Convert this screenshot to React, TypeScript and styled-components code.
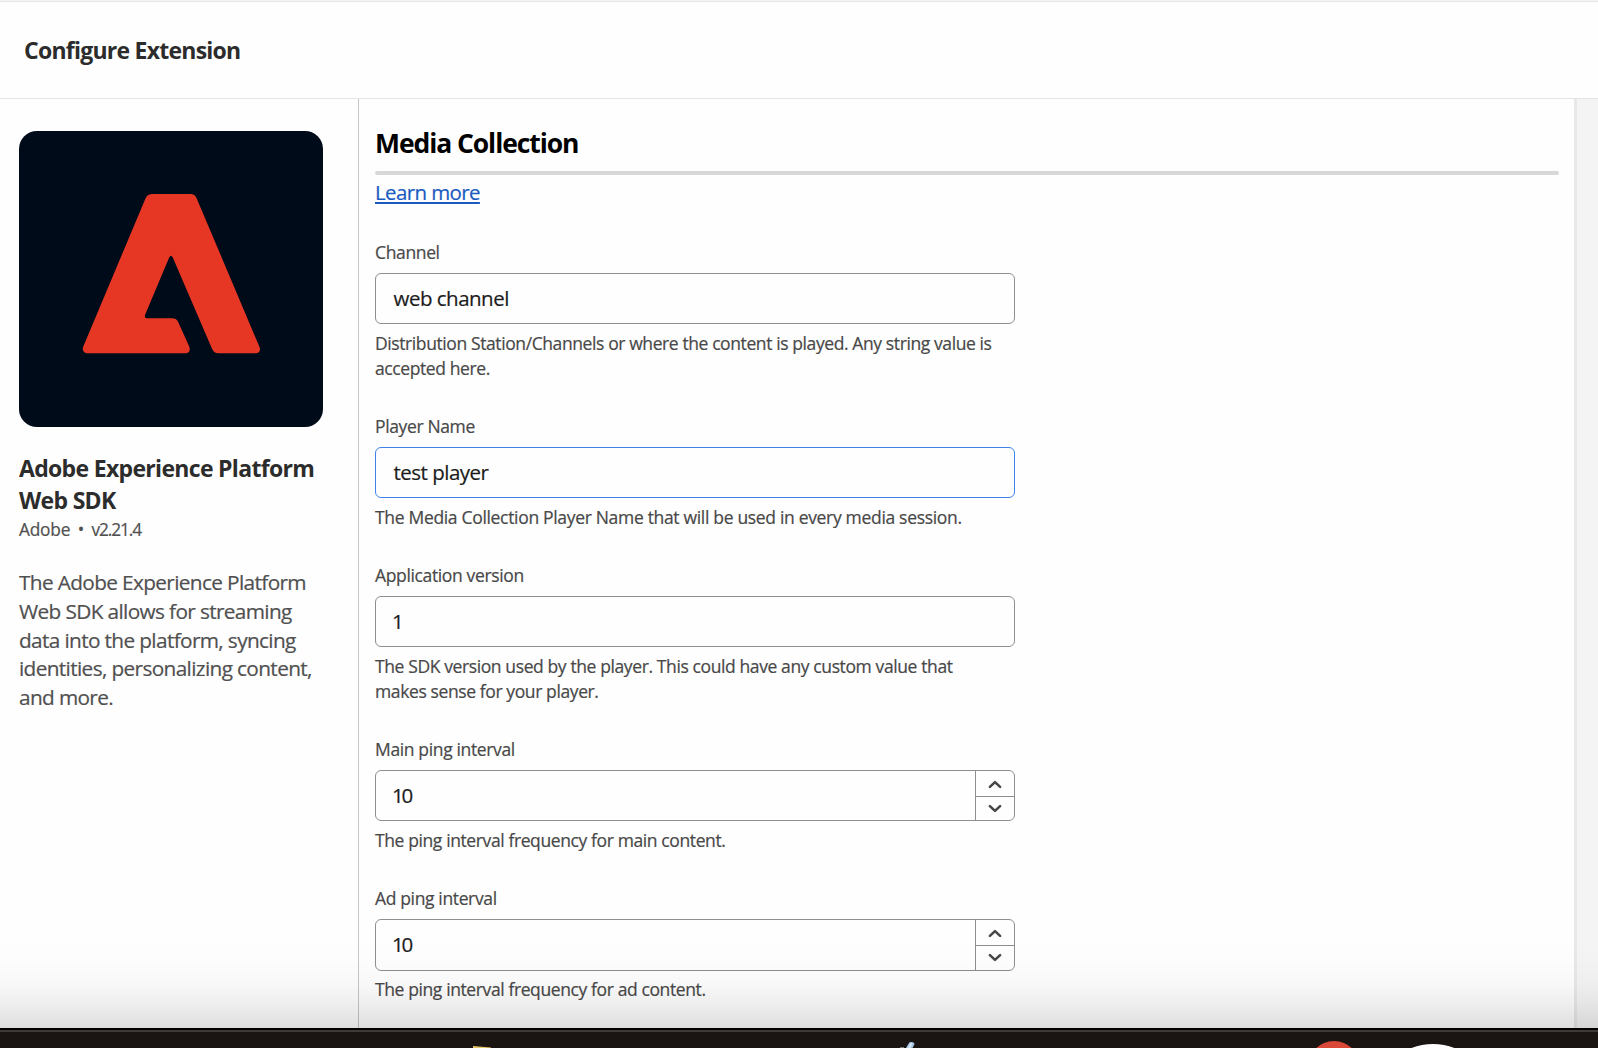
import React from 'react';
import styled, { createGlobalStyle } from 'styled-components';

const GlobalStyle = createGlobalStyle`
  *, *::before, *::after { box-sizing: border-box; }
  body {
    margin: 0;
    overflow: hidden;
    background: #fefefe;
    font-family: "Open Sans", "Noto Sans", sans-serif;
    color: #464646;
    -webkit-text-stroke: 0.2px currentColor;
  }
  h1, h2, h3, p { margin: 0; }
`;

const Page = styled.div`
  position: relative;
  display: flex;
  flex-direction: column;
  width: 1598px;
  height: 1048px;
  overflow: hidden;
`;

const Header = styled.header`
  display: flex;
  align-items: center;
  flex: none;
  height: 99px;
  padding: 0 24px;
  border-top: 1px solid #f4f4f4;
  border-bottom: 1px solid #e4e4e4;
  box-shadow: inset 0 1px 0 #e6e6e6;
`;

const Title = styled.h1`
  font-size: 23px;
  line-height: 32px;
  font-weight: 700;
  letter-spacing: -0.75px;
  color: #2c2c2c;
  -webkit-text-stroke: 0;
`;

const Body = styled.div`
  display: flex;
  flex: 1;
  min-height: 0;
`;

const Sidebar = styled.aside`
  flex: none;
  width: 359px;
  padding: 32px 19px 0;
  border-right: 1px solid #c6c6c6;
`;

const Logo = styled.svg`
  display: block;
  width: 304px;
  height: 296px;
  border-radius: 18px;
  background: #000b1a;
`;

const ProductName = styled.h2`
  margin-top: 25px;
  font-size: 23px;
  line-height: 32px;
  font-weight: 700;
  letter-spacing: -0.68px;
  color: #2c2c2c;
  white-space: nowrap;
  -webkit-text-stroke: 0;
`;

const Meta = styled.div`
  display: flex;
  gap: 7.5px;
  margin-top: 2px;
  font-size: 17.3px;
  line-height: 24px;
  letter-spacing: -0.2px;
  color: #505050;
`;

const Version = styled.span`
  letter-spacing: -1.1px;
`;

const Description = styled.p`
  margin-top: 26px;
  font-size: 20.8px;
  line-height: 28.75px;
  letter-spacing: -0.64px;
  color: #505050;
  white-space: nowrap;
`;

const Main = styled.main`
  flex: 1;
  padding: 26px 15px 0 16px;
`;

const SectionTitle = styled.h2`
  height: 46px;
  font-size: 26.5px;
  line-height: 36px;
  font-weight: 700;
  letter-spacing: -1.07px;
  color: #000;
  -webkit-text-stroke: 0;
`;

const Rule = styled.div`
  height: 4px;
  border-radius: 2px;
  background: #d8d8d8;
`;

const LearnMore = styled.a`
  display: block;
  width: max-content;
  margin-top: 3px;
  font-size: 20.5px;
  line-height: 28px;
  letter-spacing: -0.62px;
  color: #1b5bbf;
  text-decoration: underline;
  text-decoration-thickness: 2px;
  text-underline-offset: 2px;
  text-decoration-skip-ink: none;
`;

const Form = styled.div`
  display: flex;
  flex-direction: column;
  gap: 33px;
  width: 640px;
  margin-top: 34px;
`;

const Control = styled.div<{ $focused?: boolean }>`
  display: flex;
  height: 51px;
  margin: 8px 0 7px;
  border: 1px solid ${(p) => (p.$focused ? '#3f83ea' : '#8e8e8e')};
  border-radius: 6px;
  overflow: hidden;
  background: transparent;
`;

const Field = styled.div`
  display: flex;
  flex-direction: column;

  &:last-child ${Control} {
    height: 52px;
    margin-bottom: 6px;
  }
`;

const Label = styled.span`
  font-size: 17.5px;
  line-height: 25px;
  letter-spacing: -0.36px;
  color: #484848;
`;

const Value = styled.span<{ $numeric?: boolean }>`
  flex: 1;
  padding-left: ${(p) => (p.$numeric ? 16 : 17.5)}px;
  font-size: 20.5px;
  line-height: 49px;
  letter-spacing: ${(p) => (p.$numeric ? -2.2 : -0.5)}px;
  color: #1c1c1c;
`;

const Stepper = styled.div`
  display: flex;
  flex-direction: column;
  width: 39px;
  border-left: 1px solid #8e8e8e;
`;

const StepButton = styled.div<{ $up?: boolean }>`
  display: flex;
  align-items: center;
  justify-content: center;
  height: ${(p) => (p.$up ? 26 : 22)}px;
  padding-top: ${(p) => (p.$up ? 2 : 0)}px;
  border-bottom: ${(p) => (p.$up ? '1px solid #8e8e8e' : '0')};
`;

const Chevron = styled.svg`
  width: 14px;
  height: 9px;
  fill: none;
  stroke: #484848;
  stroke-width: 2.6;
  stroke-linecap: round;
  stroke-linejoin: round;
`;

const Help = styled.p<{ $tracking?: number }>`
  font-size: 17.5px;
  line-height: 25px;
  letter-spacing: ${(p) => p.$tracking ?? -0.39}px;
  color: #484848;
  white-space: nowrap;
`;

const Gutter = styled.div`
  flex: none;
  width: 24px;
  border-left: 3px solid #e8e8e8;
  background: #f4f4f4;
`;

const DockShadow = styled.div`
  position: absolute;
  left: 0;
  right: 0;
  bottom: 20px;
  height: 88px;
  background: linear-gradient(
    rgba(0, 0, 0, 0),
    rgba(0, 0, 0, 0.006) 25%,
    rgba(0, 0, 0, 0.025) 50%,
    rgba(0, 0, 0, 0.065) 75%,
    rgba(0, 0, 0, 0.125)
  );
`;

const Dock = styled.footer`
  flex: none;
  height: 20px;
  border-top: 2px solid #000;
  background: linear-gradient(#3d3a38 2px, #1a1412 2px);
`;

const DockIcons = styled.svg`
  display: block;
  width: 1598px;
  height: 18px;
`;

type FieldData = {
  label: string;
  value: string;
  help: string[];
  tracking?: number;
  focused?: boolean;
  numeric?: boolean;
  stepper?: boolean;
};

const fields: FieldData[] = [
  {
    label: 'Channel',
    value: 'web channel',
    help: ['Distribution Station/Channels or where the content is played. Any string value is', 'accepted here.'],
    tracking: -0.4,
  },
  {
    label: 'Player Name',
    value: 'test player',
    help: ['The Media Collection Player Name that will be used in every media session.'],
    tracking: -0.32,
    focused: true,
  },
  {
    label: 'Application version',
    value: '1',
    help: ['The SDK version used by the player. This could have any custom value that', 'makes sense for your player.'],
    tracking: -0.39,
    numeric: true,
  },
  { label: 'Main ping interval', value: '10', help: ['The ping interval frequency for main content.'], numeric: true, stepper: true },
  { label: 'Ad ping interval', value: '10', help: ['The ping interval frequency for ad content.'], numeric: true, stepper: true },
];

const Lines = ({ lines }: { lines: string[] }) => (
  <>
    {lines.map((line, i) => (
      <React.Fragment key={line}>
        {i > 0 && <br />}
        {line}
      </React.Fragment>
    ))}
  </>
);

const FormField = ({ label, value, help, tracking, focused, numeric, stepper }: FieldData) => (
  <Field>
    <Label>{label}</Label>
    <Control $focused={focused}>
      <Value $numeric={numeric}>{value}</Value>
      {stepper && (
        <Stepper>
          <StepButton $up>
            <Chevron viewBox="0 0 14 9"><path d="M1.9 6.9 7 2.1l5.1 4.8" /></Chevron>
          </StepButton>
          <StepButton>
            <Chevron viewBox="0 0 14 9"><path d="M1.9 2.1 7 6.9l5.1-4.8" /></Chevron>
          </StepButton>
        </Stepper>
      )}
    </Control>
    <Help $tracking={tracking}><Lines lines={help} /></Help>
  </Field>
);

export default function App() {
  return (
    <>
      <GlobalStyle />
      <Page>
        <Header>
          <Title>Configure Extension</Title>
        </Header>
        <Body>
          <Sidebar>
            <Logo viewBox="0 0 304 296">
              <path
                fill="#e63624"
                d="M133.5 63H171.5Q175.7 63 177.6 67.2L240.3 215.5Q242 219.5 239.8 221.3Q238.8 222.3 237 222.3H199.5Q195 222.3 193 217.7L153.8 126.5Q152 123 150.2 126.5L126 184Q125.2 187 128 187.2H154Q157.2 187.2 158.7 190L170 215Q171.7 219 169.6 221.3Q168.6 222.3 166.5 222.3H68Q65.8 222.3 64.6 220.6Q63 218.5 64.5 215L126.6 67.2Q128.6 63 133.5 63Z"
              />
            </Logo>
            <ProductName><Lines lines={['Adobe Experience Platform', 'Web SDK']} /></ProductName>
            <Meta>
              <span>Adobe</span>
              <span>•</span>
              <Version>v2.21.4</Version>
            </Meta>
            <Description>
              <Lines
                lines={[
                  'The Adobe Experience Platform',
                  'Web SDK allows for streaming',
                  'data into the platform, syncing',
                  'identities, personalizing content,',
                  'and more.',
                ]}
              />
            </Description>
          </Sidebar>
          <Main>
            <SectionTitle>Media Collection</SectionTitle>
            <Rule />
            <LearnMore>Learn more</LearnMore>
            <Form>
              {fields.map((field) => (
                <FormField key={field.label} {...field} />
              ))}
            </Form>
          </Main>
          <Gutter />
        </Body>
        <Dock>
          <DockIcons viewBox="0 0 1598 18">
            <path d="M473 16 491 17.4V18H473Z" fill="#e3c766" />
            <path d="M906 18 909.5 12.3Q914 11.3 914.5 14L912.5 18Z" fill="#a9c8e8" />
            <path d="M909 18 911.5 13.3" stroke="#e4eef8" strokeWidth="1.5" />
            <path d="M900 17.5h4" stroke="#77777c" />
            <circle cx="1334" cy="37" r="26" fill="#da4838" />
            <circle cx="1433" cy="73.5" r="59.5" fill="#fff" />
          </DockIcons>
        </Dock>
        <DockShadow />
      </Page>
    </>
  );
}
